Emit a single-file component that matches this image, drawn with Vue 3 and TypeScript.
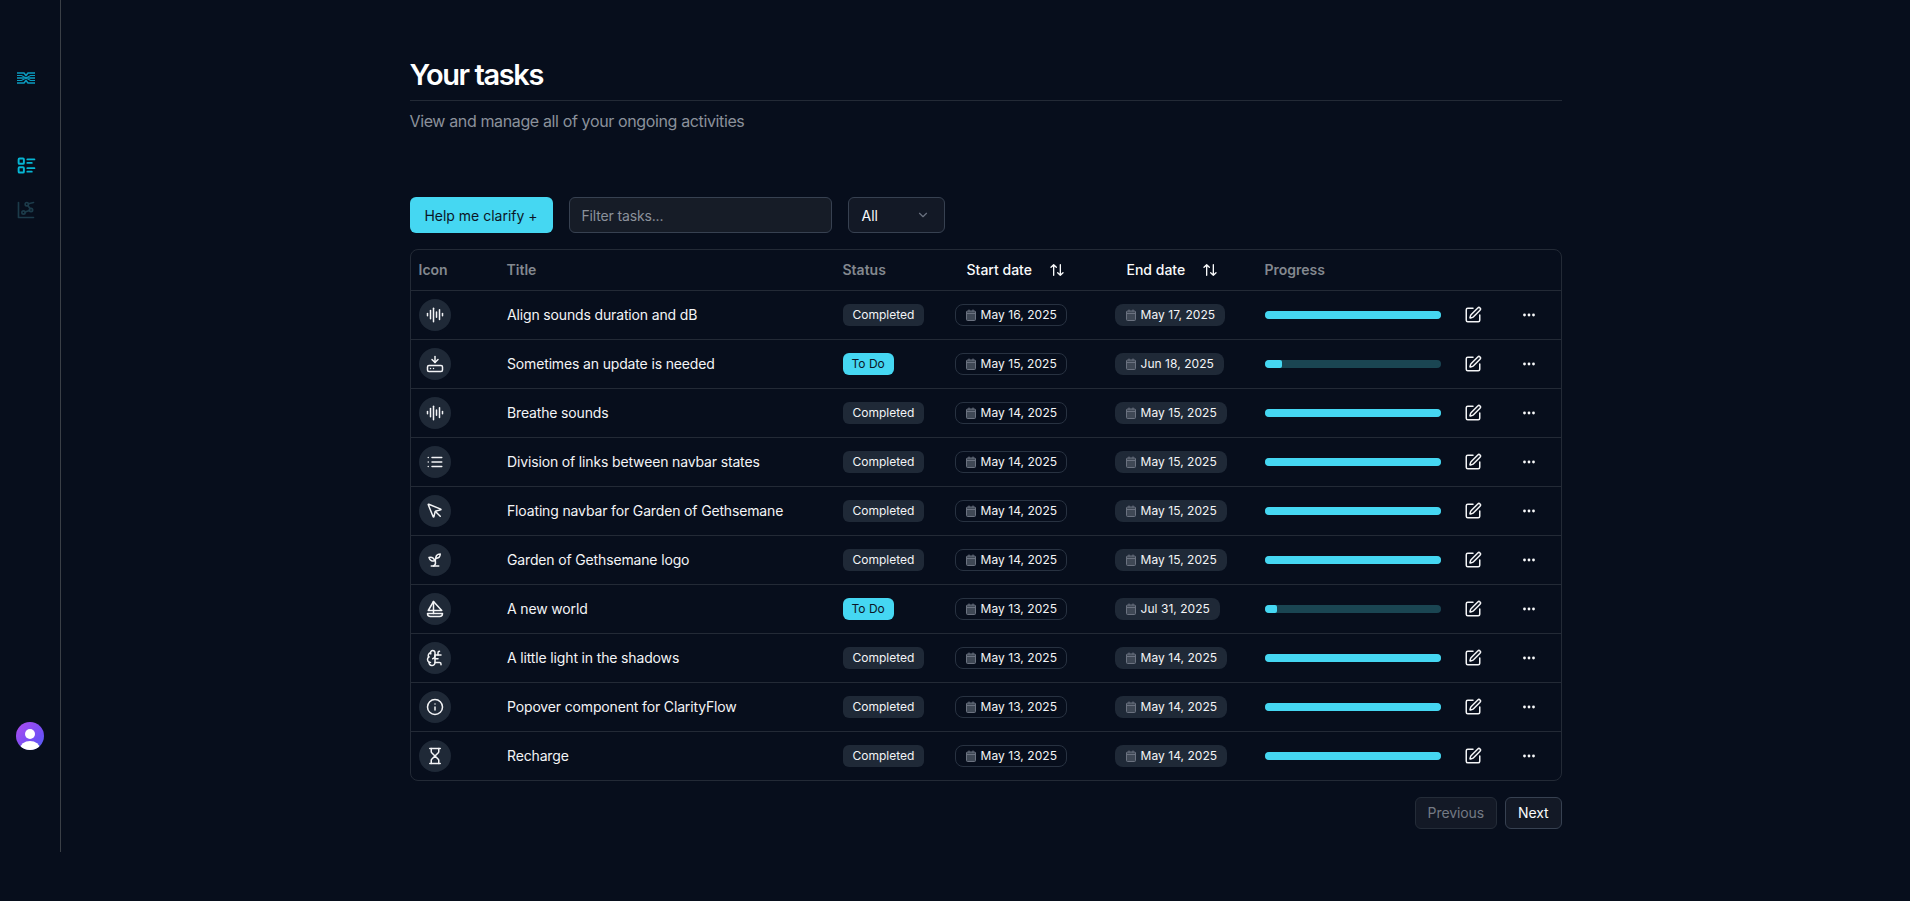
<script setup lang="ts">
interface Task {
  icon: string
  title: string
  status: 'Completed' | 'To Do'
  start: string
  end: string
  progress: number
}

const icons: Record<string, string[]> = {
  audio: ['M2 10v3', 'M6 6v11', 'M10 3v18', 'M14 8v7', 'M18 5v13', 'M22 10v3'],
  drive: ['M12 2v8', 'm16 6-4 4-4-4', 'M4 14h16a2 2 0 0 1 2 2v4a2 2 0 0 1-2 2H4a2 2 0 0 1-2-2v-4a2 2 0 0 1 2-2z', 'M6 18h.01', 'M10 18h.01'],
  list: ['M3 12h.01', 'M3 18h.01', 'M3 6h.01', 'M8 12h13', 'M8 18h13', 'M8 6h13'],
  pointer: ['M12.586 12.586 19 19', 'M3.688 3.037a.497.497 0 0 0-.651.651l6.5 15.999a.501.501 0 0 0 .947-.062l1.569-6.083a2 2 0 0 1 1.448-1.479l6.124-1.579a.5.5 0 0 0 .063-.947z'],
  sprout: ['M7 20h10', 'M10 20c5.5-2.5.8-6.4 3-10', 'M9.5 9.4c1.1.8 1.8 2.2 2.3 3.7-2 .4-3.5.4-4.8-.3-1.2-.6-2.3-1.9-3-4.2 2.8-.5 4.4 0 5.5.8z', 'M14.1 6a7 7 0 0 0-1.1 4c1.9-.1 3.3-.6 4.3-1.4 1-1 1.6-2.3 1.7-4.6-2.7.1-4 1-4.9 2z'],
  sailboat: ['M22 18H2a4 4 0 0 0 4 4h12a4 4 0 0 0 4-4Z', 'M21 14 10 2 3 14h18Z', 'M10 2v16'],
  brain: ['M12 5a3 3 0 1 0-5.997.125 4 4 0 0 0-2.526 5.77 4 4 0 0 0 .556 6.588A4 4 0 1 0 12 18Z', 'M9 13a4.5 4.5 0 0 0 3-4', 'M6.003 5.125A3 3 0 0 0 6.401 6.5', 'M3.477 10.896a4 4 0 0 1 .585-.396', 'M6 18a4 4 0 0 1-1.967-.516', 'M12 13h4', 'M12 18h6a2 2 0 0 1 2 2v1', 'M12 8h8', 'M16 8V5a2 2 0 0 1 2-2'],
  info: ['M12 2a10 10 0 1 0 0 20 10 10 0 0 0 0-20z', 'M12 16v-4', 'M12 8h.01'],
  hourglass: ['M5 22h14', 'M5 2h14', 'M17 22v-4.172a2 2 0 0 0-.586-1.414L12 12l-4.414 4.414A2 2 0 0 0 7 17.828V22', 'M7 2v4.172a2 2 0 0 0 .586 1.414L12 12l4.414-4.414A2 2 0 0 0 17 6.172V2'],
}

const tasks: Task[] = [
  { icon: 'audio', title: 'Align sounds duration and dB', status: 'Completed', start: 'May 16, 2025', end: 'May 17, 2025', progress: 100 },
  { icon: 'drive', title: 'Sometimes an update is needed', status: 'To Do', start: 'May 15, 2025', end: 'Jun 18, 2025', progress: 10 },
  { icon: 'audio', title: 'Breathe sounds', status: 'Completed', start: 'May 14, 2025', end: 'May 15, 2025', progress: 100 },
  { icon: 'list', title: 'Division of links between navbar states', status: 'Completed', start: 'May 14, 2025', end: 'May 15, 2025', progress: 100 },
  { icon: 'pointer', title: 'Floating navbar for Garden of Gethsemane', status: 'Completed', start: 'May 14, 2025', end: 'May 15, 2025', progress: 100 },
  { icon: 'sprout', title: 'Garden of Gethsemane logo', status: 'Completed', start: 'May 14, 2025', end: 'May 15, 2025', progress: 100 },
  { icon: 'sailboat', title: 'A new world', status: 'To Do', start: 'May 13, 2025', end: 'Jul 31, 2025', progress: 7 },
  { icon: 'brain', title: 'A little light in the shadows', status: 'Completed', start: 'May 13, 2025', end: 'May 14, 2025', progress: 100 },
  { icon: 'info', title: 'Popover component for ClarityFlow', status: 'Completed', start: 'May 13, 2025', end: 'May 14, 2025', progress: 100 },
  { icon: 'hourglass', title: 'Recharge', status: 'Completed', start: 'May 13, 2025', end: 'May 14, 2025', progress: 100 },
]
</script>

<template>
  <div class="page">
    <aside class="sidebar">
      <svg class="logo" width="18" height="12" viewBox="0 0 18 12" fill="none" stroke="#0b9cc0" stroke-width="1.6">
        <path d="M0 1h7l2 2.500L11 1h7M0 11h7l2-2.500 2 2.500h7M0 6h18" />
        <path d="M0 3.500h4.500l9 5H18M0 8.500h4.500l9-5H18" stroke-width="1.100" />
      </svg>
      <svg class="nav-one" width="21" height="21" viewBox="0 0 24 24" fill="none" stroke="#06b6d4" stroke-width="2.200" stroke-linecap="round" stroke-linejoin="round">
        <path d="M13 5h8M13 9h5M13 15h8M13 19h5" />
        <rect x="3" y="4" width="6" height="6" rx="1" />
        <rect x="3" y="14" width="6" height="6" rx="1" />
      </svg>
      <svg class="nav-two" width="20" height="20" viewBox="0 0 24 24" fill="none" stroke="#1c3b4a" stroke-width="2" stroke-linecap="round" stroke-linejoin="round">
        <path d="M3 3v18h18M21 3l-6 1.500M14.113 6.650l2.771 3.695M16 12.500l-5 2" />
        <circle cx="9" cy="15" r="2" />
        <circle cx="13" cy="5" r="2" />
        <circle cx="18" cy="12" r="2" />
      </svg>
      <div class="avatar">
        <span class="avatar-head"></span>
        <span class="avatar-body"></span>
      </div>
    </aside>

    <main class="main">
      <h1 class="title">Your tasks</h1>
      <p class="subtitle">View and manage all of your ongoing activities</p>

      <div class="toolbar">
        <button class="clarify" type="button">Help me clarify +</button>
        <input class="filter" type="text" placeholder="Filter tasks..." />
        <div class="select">
          <span>All</span>
          <svg width="14" height="14" viewBox="0 0 24 24" fill="none" stroke="#6b7280" stroke-width="2" stroke-linecap="round" stroke-linejoin="round"><path d="m6 9 6 6 6-6" /></svg>
        </div>
      </div>

      <div class="table">
        <div class="row head">
          <span class="cell lift">Icon</span>
          <span class="cell lift">Title</span>
          <span class="cell lift">Status</span>
          <span class="cell sort">Start date
            <svg width="16" height="16" viewBox="0 0 24 24" fill="none" stroke="currentColor" stroke-width="2" stroke-linecap="round" stroke-linejoin="round"><path d="m21 16-4 4-4-4M17 20V4M3 8l4-4 4 4M7 4v16" /></svg>
          </span>
          <span class="cell sort">End date
            <svg width="16" height="16" viewBox="0 0 24 24" fill="none" stroke="currentColor" stroke-width="2" stroke-linecap="round" stroke-linejoin="round"><path d="m21 16-4 4-4-4M17 20V4M3 8l4-4 4 4M7 4v16" /></svg>
          </span>
          <span class="cell lift">Progress</span>
          <span></span>
          <span></span>
        </div>

        <div v-for="task in tasks" :key="task.title" class="row">
          <div class="cell">
            <span class="icon-circle">
              <svg width="18" height="18" viewBox="0 0 24 24" fill="none" stroke="#f3f4f6" stroke-width="2" stroke-linecap="round" stroke-linejoin="round">
                <path v-for="d in icons[task.icon]" :key="d" :d="d" />
              </svg>
            </span>
          </div>
          <div class="cell task-title lift">{{ task.title }}</div>
          <div class="cell">
            <span class="badge" :class="task.status === 'To Do' ? 'todo' : 'done'">{{ task.status }}</span>
          </div>
          <div class="cell">
            <span class="badge date outline">
              <svg width="12" height="12" viewBox="0 0 12 12" fill="#3f4855" stroke="#6b7280" stroke-width="1"><rect x="1.500" y="2" width="9" height="9.500" rx="1" /><path d="M1.500 4.500h9M4 .5v2M8 .5v2" fill="none" /></svg>
              {{ task.start }}
            </span>
          </div>
          <div class="cell">
            <span class="badge date filled">
              <svg width="12" height="12" viewBox="0 0 12 12" fill="#3f4855" stroke="#6b7280" stroke-width="1"><rect x="1.500" y="2" width="9" height="9.500" rx="1" /><path d="M1.500 4.500h9M4 .5v2M8 .5v2" fill="none" /></svg>
              {{ task.end }}
            </span>
          </div>
          <div class="cell">
            <div class="bar">
              <div class="bar-fill" :style="{ width: task.progress + '%' }"></div>
            </div>
          </div>
          <div class="action">
            <svg width="18" height="18" viewBox="0 0 24 24" fill="none" stroke="#f3f4f6" stroke-width="2" stroke-linecap="round" stroke-linejoin="round">
              <path d="M12 3H5a2 2 0 0 0-2 2v14a2 2 0 0 0 2 2h14a2 2 0 0 0 2-2v-7" />
              <path d="M18.375 2.625a1 1 0 0 1 3 3l-9.013 9.014a2 2 0 0 1-.853.505l-2.873.84a.5.5 0 0 1-.62-.62l.84-2.873a2 2 0 0 1 .506-.852z" />
            </svg>
          </div>
          <div class="action">
            <svg width="16" height="16" viewBox="0 0 16 16" fill="#f9fafb"><circle cx="3.500" cy="8" r="1.400" /><circle cx="8" cy="8" r="1.400" /><circle cx="12.500" cy="8" r="1.400" /></svg>
          </div>
        </div>
      </div>

      <div class="pager">
        <button class="page-btn disabled" type="button">Previous</button>
        <button class="page-btn" type="button">Next</button>
      </div>
    </main>
  </div>
</template>

<style>
html,
body {
  margin: 0;
  background: #070e1c;
}
</style>

<style scoped>
.page {
  display: flex;
  align-items: flex-start;
  min-height: 901px;
  background: #070e1c;
  font-family: Inter, "Liberation Sans", sans-serif;
  color: #f9fafb;
}

.sidebar {
  box-sizing: border-box;
  flex: none;
  width: 61px;
  height: 852px;
  border-right: 1px solid #3a3f46;
  display: flex;
  flex-direction: column;
  align-items: flex-start;
  padding: 72px 0 102px 16px;
}

.logo {
  margin-left: 1px;
}

.nav-one {
  margin-top: 71px;
}

.nav-two {
  margin-top: 24px;
}

.avatar {
  position: relative;
  margin-top: auto;
  width: 28px;
  height: 28px;
  border-radius: 50%;
  overflow: hidden;
  background: linear-gradient(135deg, #b04cf0 0%, #6d4ff5 70%, #4f6af5 100%);
}

.avatar-head {
  position: absolute;
  left: 9px;
  top: 7px;
  width: 10px;
  height: 10px;
  border-radius: 50%;
  background: #fff;
}

.avatar-body {
  position: absolute;
  left: 4px;
  top: 19px;
  width: 20px;
  height: 16px;
  border-radius: 50%;
  background: #fff;
}

.main {
  flex: 1;
  min-width: 0;
  box-sizing: border-box;
  max-width: 1152px;
  margin: 0 auto;
  padding-top: 57px;
}

.title {
  margin: 0;
  padding-bottom: 7px;
  border-bottom: 1px solid #232a36;
  font-size: 29px;
  line-height: 36px;
  font-weight: 600;
  letter-spacing: -1.4px;
  color: #fff;
}

.subtitle {
  margin: 8px 0 0;
  font-size: 16px;
  line-height: 24px;
  letter-spacing: -0.37px;
  color: #8b919b;
}

.toolbar {
  display: flex;
  align-items: center;
  gap: 16px;
  margin-top: 64px;
}

.clarify {
  box-sizing: border-box;
  width: 143px;
  height: 36px;
  border: none;
  border-radius: 6px;
  background: #45d7f2;
  color: #0b1626;
  font: 400 14px Inter, sans-serif;
  padding: 0;
}

.filter {
  box-sizing: border-box;
  width: 263px;
  height: 36px;
  border: 1px solid #374151;
  border-radius: 6px;
  background: #161c27;
  color: #f9fafb;
  padding: 0 12px;
  font: 400 14px Inter, sans-serif;
  letter-spacing: -0.15px;
  outline: none;
}

.filter::placeholder {
  color: #8b919b;
  opacity: 1;
}

.select {
  box-sizing: border-box;
  width: 97px;
  height: 36px;
  border: 1px solid #374151;
  border-radius: 6px;
  background: #131926;
  display: flex;
  align-items: center;
  justify-content: space-between;
  padding: 0 14px 0 13px;
  font-size: 14px;
}

.table {
  margin-top: 16px;
  border: 1px solid #232a36;
  border-radius: 8px;
}

.row {
  display: grid;
  grid-template-columns: 88px 336px 112px 160px 150px 192px 48px 64px;
  height: 49px;
  align-items: center;
  border-top: 1px solid #232a36;
  box-sizing: border-box;
  font-size: 14px;
  letter-spacing: -0.15px;
}

.row.head {
  height: 40px;
  border-top: none;
  font-weight: 600;
  letter-spacing: 0;
  color: #83888f;
}

.cell {
  padding-left: 8px;
  min-width: 0;
}

.lift {
  padding-bottom: 2px;
}

.task-title {
  padding-left: 8.500px;
  color: #f3f4f6;
}

.sort {
  display: flex;
  align-items: center;
  gap: 17px;
  padding-left: 20px;
  padding-bottom: 1px;
  color: #f9fafb;
  font-weight: 500;
}

.icon-circle {
  width: 32px;
  height: 32px;
  border-radius: 50%;
  background: #1f2937;
  display: flex;
  align-items: center;
  justify-content: center;
}

.badge {
  box-sizing: border-box;
  display: inline-flex;
  align-items: center;
  height: 22px;
  padding: 0 9px 1px;
  border-radius: 6px;
  font-size: 12px;
  font-weight: 400;
  letter-spacing: 0;
  border: 1px solid transparent;
  vertical-align: middle;
}

.done {
  background: #1f2937;
  color: #f3f4f6;
}

.todo {
  padding: 0 8px 1px;
  background: #45d7f2;
  color: #0b1626;
}

.date {
  gap: 4px;
  border-radius: 8px;
  letter-spacing: 0.05px;
  color: #f3f4f6;
}

.outline {
  border-color: #283241;
}

.filled {
  background: #1f2937;
}

.bar {
  width: 176px;
  height: 8px;
  border-radius: 4px;
  background: #1a4552;
  overflow: hidden;
}

.bar-fill {
  height: 100%;
  background: #45d7f2;
  border-radius: 2px;
}

.action {
  display: flex;
  justify-content: center;
  align-items: center;
}

.pager {
  display: flex;
  justify-content: flex-end;
  gap: 8px;
  margin-top: 16px;
}

.page-btn {
  box-sizing: border-box;
  height: 32px;
  padding: 0 12px 1px;
  border: 1px solid #374151;
  border-radius: 6px;
  background: #131926;
  color: #f9fafb;
  font: 400 14px Inter, sans-serif;
  letter-spacing: -0.1px;
}

.page-btn.disabled {
  color: #747a84;
  border-color: #242c38;
}
</style>
